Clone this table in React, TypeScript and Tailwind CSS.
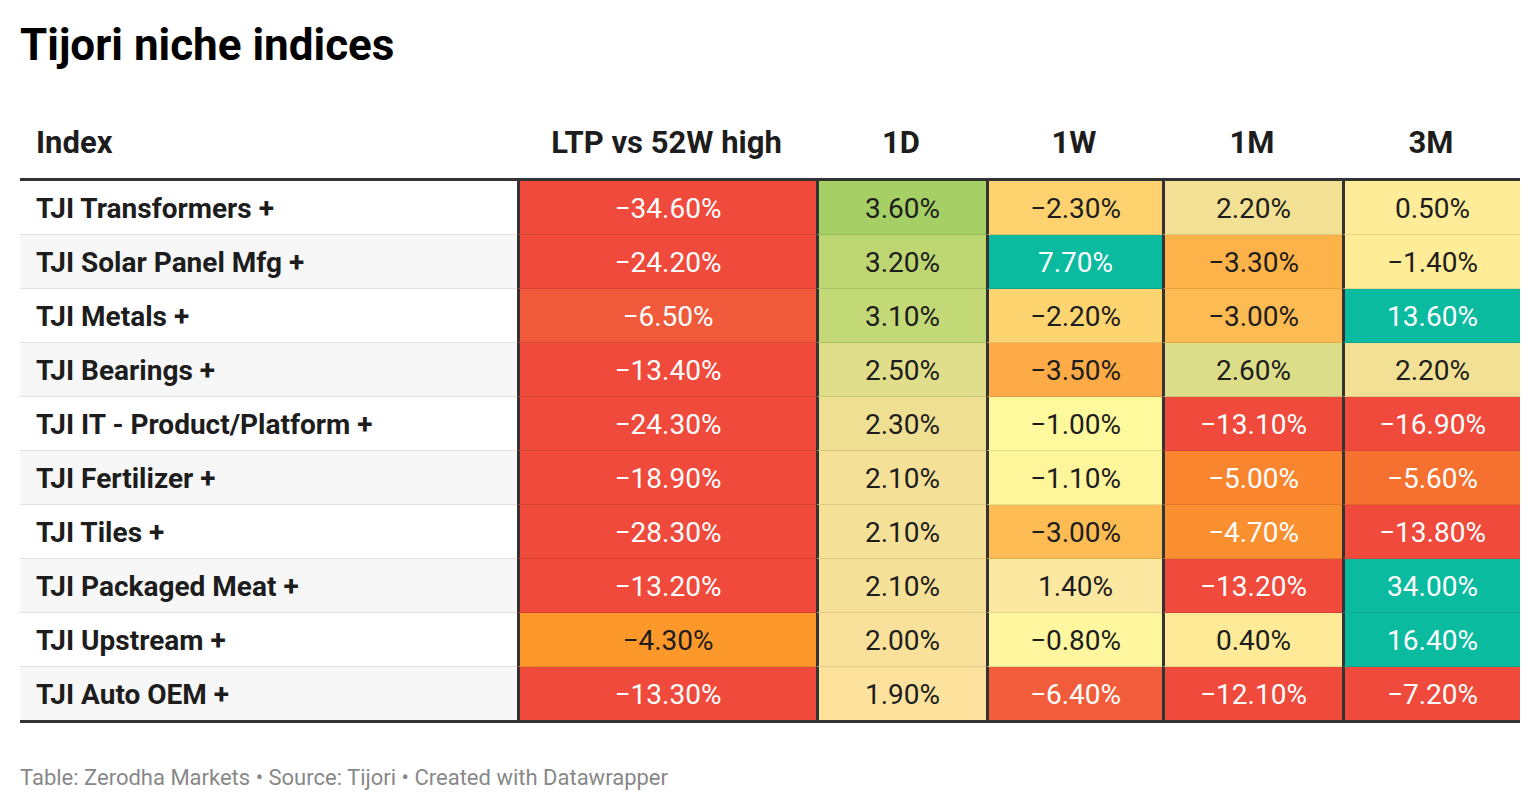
import React from "react";

type Cell = { v: string; bg: string; w?: boolean };

const RED = "#ef4a3c";
const TEAL = "#0bbb9f";

const rows: { name: string; cells: Cell[] }[] = [
  {
    name: "TJI Transformers +",
    cells: [
      { v: "−34.60%", bg: RED, w: true },
      { v: "3.60%", bg: "#a6d066" },
      { v: "−2.30%", bg: "#fed26f" },
      { v: "2.20%", bg: "#f2e194" },
      { v: "0.50%", bg: "#ffec98" },
    ],
  },
  {
    name: "TJI Solar Panel Mfg +",
    cells: [
      { v: "−24.20%", bg: RED, w: true },
      { v: "3.20%", bg: "#bdd672" },
      { v: "7.70%", bg: TEAL, w: true },
      { v: "−3.30%", bg: "#fdb349" },
      { v: "−1.40%", bg: "#ffec96" },
    ],
  },
  {
    name: "TJI Metals +",
    cells: [
      { v: "−6.50%", bg: "#f05a3a", w: true },
      { v: "3.10%", bg: "#c3d876" },
      { v: "−2.20%", bg: "#fed471" },
      { v: "−3.00%", bg: "#fdbb53" },
      { v: "13.60%", bg: TEAL, w: true },
    ],
  },
  {
    name: "TJI Bearings +",
    cells: [
      { v: "−13.40%", bg: RED, w: true },
      { v: "2.50%", bg: "#e1de8b" },
      { v: "−3.50%", bg: "#fdab46" },
      { v: "2.60%", bg: "#dcdd88" },
      { v: "2.20%", bg: "#f2e194" },
    ],
  },
  {
    name: "TJI IT - Product/Platform +",
    cells: [
      { v: "−24.30%", bg: RED, w: true },
      { v: "2.30%", bg: "#eedf93" },
      { v: "−1.00%", bg: "#fff99e" },
      { v: "−13.10%", bg: RED, w: true },
      { v: "−16.90%", bg: RED, w: true },
    ],
  },
  {
    name: "TJI Fertilizer +",
    cells: [
      { v: "−18.90%", bg: RED, w: true },
      { v: "2.10%", bg: "#f5e098" },
      { v: "−1.10%", bg: "#fff69b" },
      { v: "−5.00%", bg: "#f9862f", w: true },
      { v: "−5.60%", bg: "#f6702f", w: true },
    ],
  },
  {
    name: "TJI Tiles +",
    cells: [
      { v: "−28.30%", bg: RED, w: true },
      { v: "2.10%", bg: "#f5e098" },
      { v: "−3.00%", bg: "#fdbb53" },
      { v: "−4.70%", bg: "#fa8f2f", w: true },
      { v: "−13.80%", bg: RED, w: true },
    ],
  },
  {
    name: "TJI Packaged Meat +",
    cells: [
      { v: "−13.20%", bg: RED, w: true },
      { v: "2.10%", bg: "#f5e098" },
      { v: "1.40%", bg: "#fde8a1" },
      { v: "−13.20%", bg: RED, w: true },
      { v: "34.00%", bg: TEAL, w: true },
    ],
  },
  {
    name: "TJI Upstream +",
    cells: [
      { v: "−4.30%", bg: "#fd982b" },
      { v: "2.00%", bg: "#fae19b" },
      { v: "−0.80%", bg: "#fff7a0" },
      { v: "0.40%", bg: "#ffeb97" },
      { v: "16.40%", bg: TEAL, w: true },
    ],
  },
  {
    name: "TJI Auto OEM +",
    cells: [
      { v: "−13.30%", bg: RED, w: true },
      { v: "1.90%", bg: "#fde29d" },
      { v: "−6.40%", bg: "#f15d3a", w: true },
      { v: "−12.10%", bg: RED, w: true },
      { v: "−7.20%", bg: RED, w: true },
    ],
  },
];

const widths = ["w-[299px]", "w-[170px]", "w-[176px]", "w-[180px]", "w-[178px]"];
const headers = ["LTP vs 52W high", "1D", "1W", "1M", "3M"];

export default function App() {
  return (
    <div
      className="w-[1540px] h-[810px] bg-white px-[20px] text-[#1d1d1d]"
      style={{ fontFamily: "Roboto, 'Liberation Sans', sans-serif" }}
    >
      <div className="pt-[18px] text-[44px] leading-[54px] font-bold text-black">
        Tijori niche indices
      </div>
      <div className="mt-[38px] w-[1500px]">
        <div className="flex h-[68px] items-center pb-[2px] text-[31px] font-bold">
          <div className="w-[497px] pl-[16px]">Index</div>
          {headers.map((h, i) => (
            <div key={h} className={`${widths[i]} text-center`}>
              {h}
            </div>
          ))}
        </div>
        <div className="border-t-[3px] border-b-[3px] border-[#333]">
          {rows.map((r, ri) => (
            <div
              key={r.name}
              className={`flex h-[54px] last:h-[53px] ${ri % 2 === 1 ? "bg-[#f7f7f7]" : "bg-white"}`}
            >
              <div
                className={`w-[497px] pl-[16px] pt-[2px] flex items-center text-[28px] font-bold ${
                  ri < rows.length - 1 ? "border-b border-[#e2e2e2]" : ""
                }`}
              >
                {r.name}
              </div>
              {r.cells.map((c, ci) => (
                <div
                  key={ci}
                  className={`${widths[ci]} border-l-[3px] border-l-[#333] pt-[2px] flex items-center justify-center text-[28px] ${
                    c.w ? "text-white" : "text-[#1d1d1d]"
                  } ${ri < rows.length - 1 ? "border-b border-b-black/10" : ""}`}
                  style={{ backgroundColor: c.bg }}
                >
                  {c.v}
                </div>
              ))}
            </div>
          ))}
        </div>
      </div>
      <div className="mt-[38px] text-[22px] text-[#888888]">
        Table: Zerodha Markets • Source: Tijori • Created with Datawrapper
      </div>
    </div>
  );
}
